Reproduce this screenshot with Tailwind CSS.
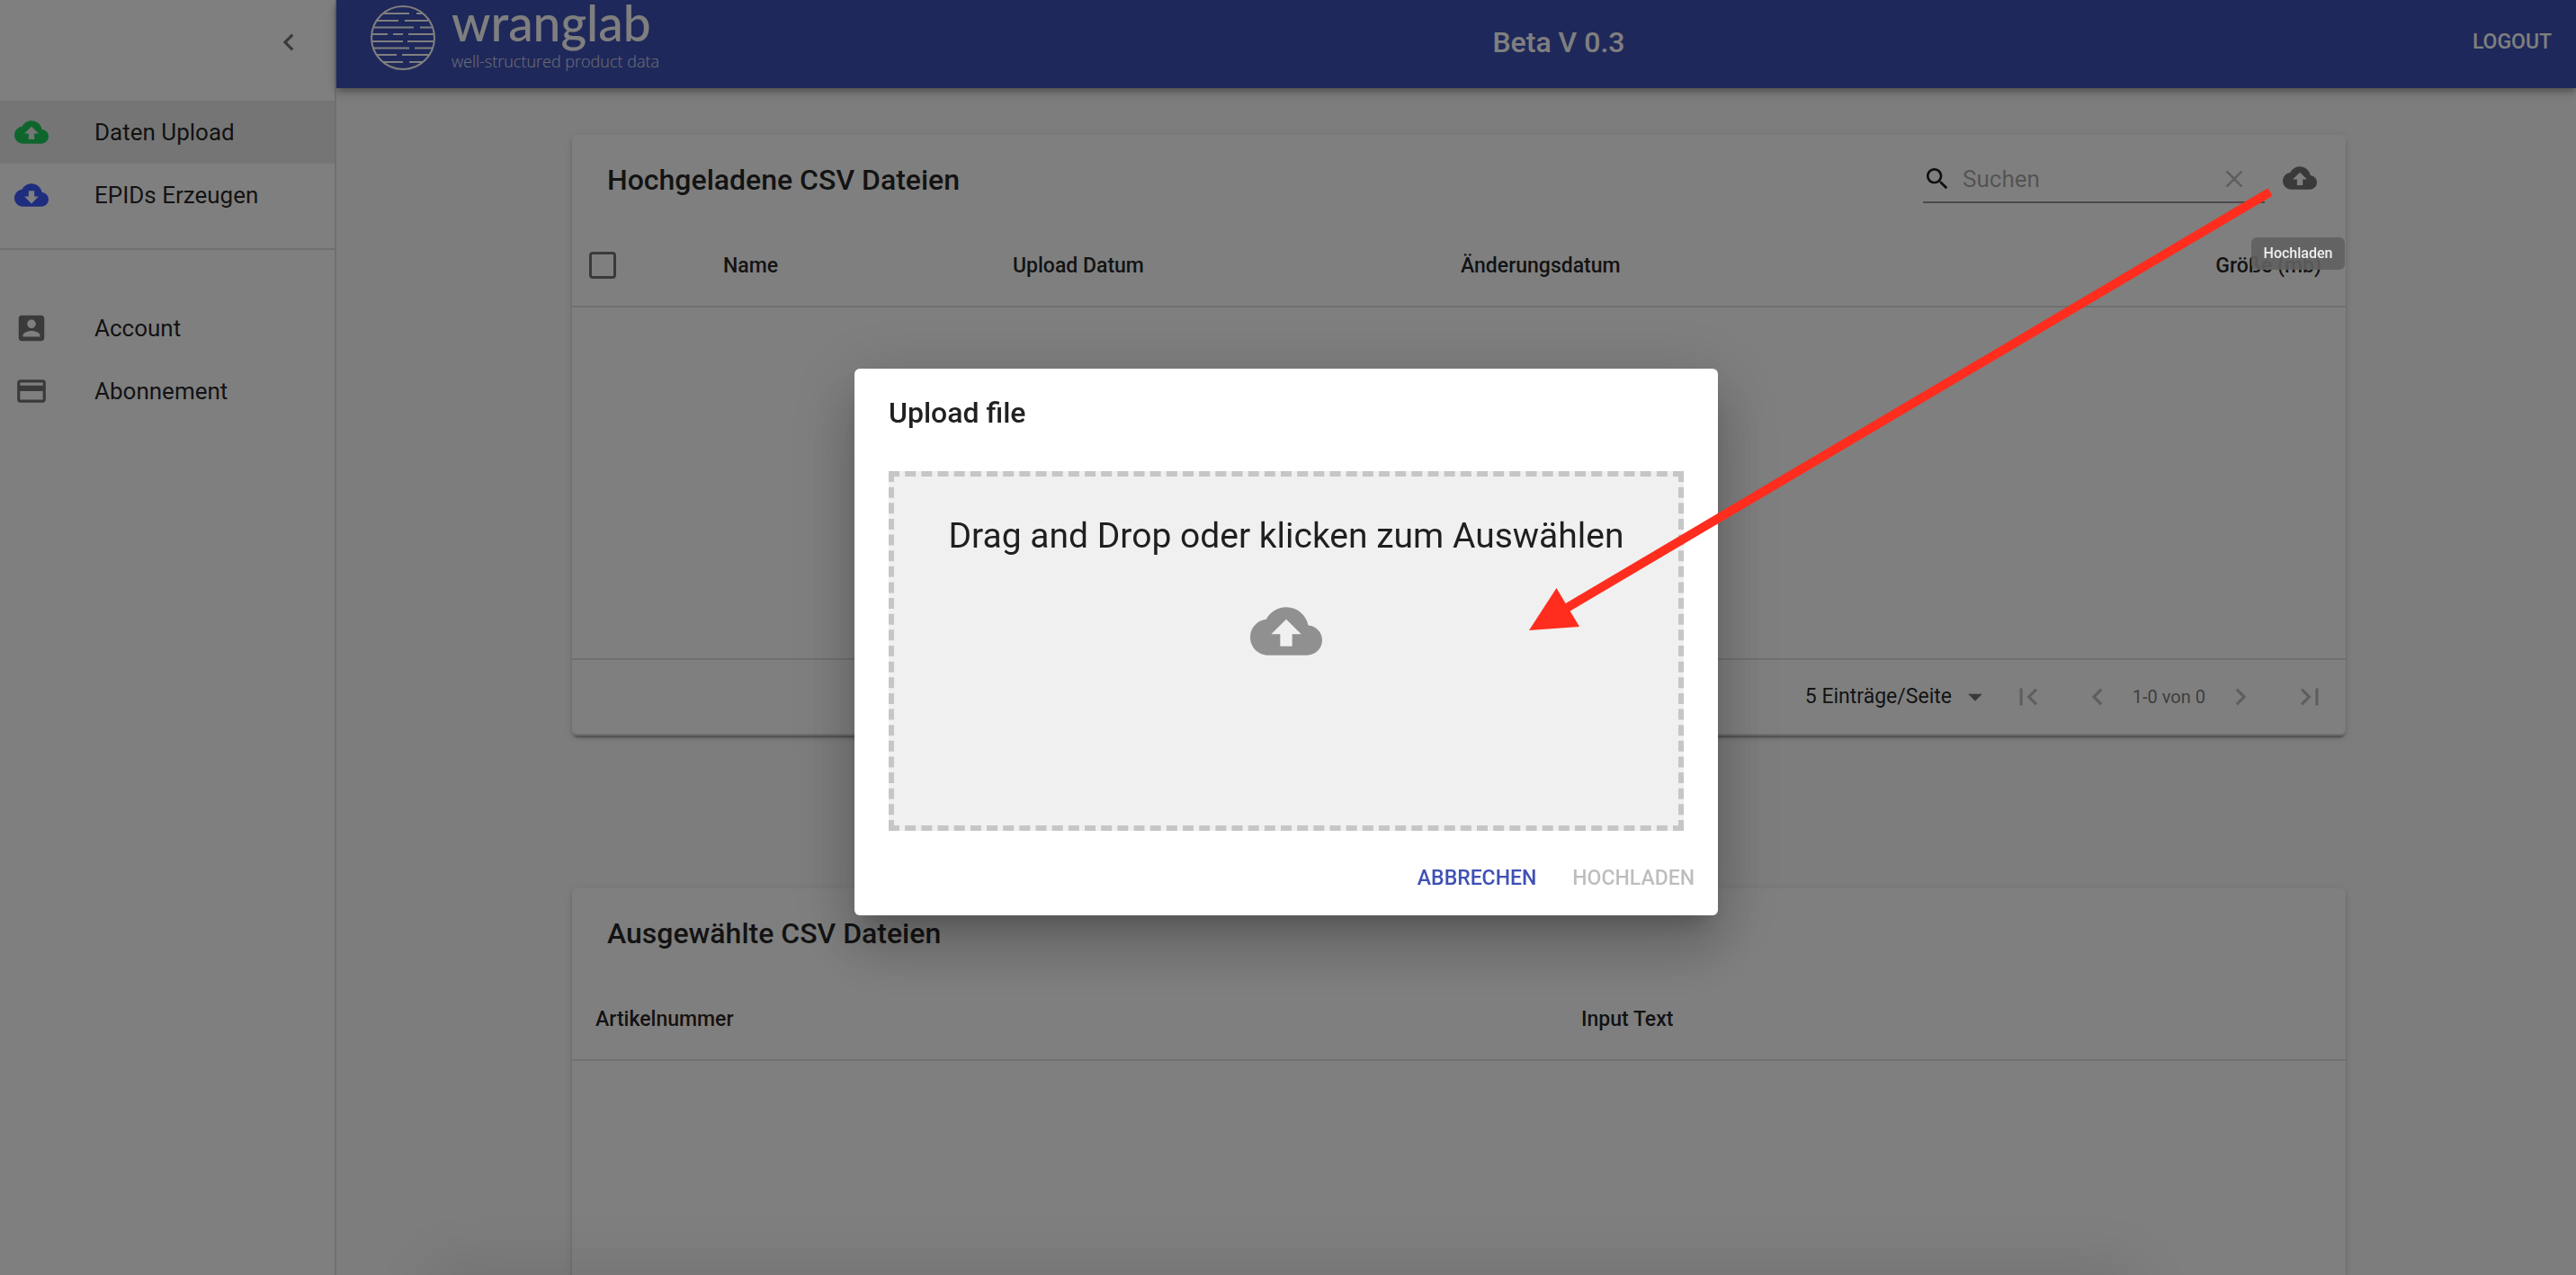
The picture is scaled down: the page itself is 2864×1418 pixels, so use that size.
<!DOCTYPE html>
<html lang="de">
<head>
<meta charset="utf-8">
<title>wranglab</title>
<script src="https://cdn.jsdelivr.net/npm/@tailwindcss/browser@4"></script>
</head>
<body class="font-[Roboto,sans-serif] text-black/87 bg-[#fafafa] overflow-hidden">
<svg class="hidden" aria-hidden="true">
  <symbol id="cloud-up" viewBox="0 0 24 24"><path d="M19.35 10.04C18.67 6.59 15.64 4 12 4 9.11 4 6.6 5.64 5.35 8.04 2.34 8.36 0 10.91 0 14c0 3.31 2.69 6 6 6h13c2.76 0 5-2.24 5-5 0-2.64-2.05-4.78-4.65-4.96zM14 13v4h-4v-4H7l5-5 5 5h-3z"/></symbol>
  <symbol id="cloud-down" viewBox="0 0 24 24"><path d="M19.35 10.04C18.67 6.59 15.64 4 12 4 9.11 4 6.6 5.64 5.35 8.04 2.34 8.36 0 10.91 0 14c0 3.31 2.69 6 6 6h13c2.76 0 5-2.24 5-5 0-2.64-2.05-4.78-4.65-4.96zM17 13l-5 5-5-5h3V9h4v4h3z"/></symbol>
  <symbol id="chev-left" viewBox="0 0 24 24"><path d="M15.41 7.41L14 6l-6 6 6 6 1.41-1.41L10.83 12z"/></symbol>
  <symbol id="chev-right" viewBox="0 0 24 24"><path d="M10 6L8.59 7.41 13.17 12l-4.58 4.59L10 18l6-6z"/></symbol>
</svg>

<div class="flex h-screen">
  <aside class="w-[374px] shrink-0 bg-white border-r-2 border-black/12">
    <div class="flex h-28 items-start justify-end pt-7 pr-8">
      <button type="button" aria-label="Menü einklappen" class="text-black/54"><svg class="size-[38px] fill-current"><use href="#chev-left"/></svg></button>
    </div>
    <nav class="text-[26px]">
      <div class="h-[166px] border-b-2 border-black/12">
        <a href="#" class="flex h-[70px] items-center gap-[51px] pl-4 bg-black/8"><svg class="size-[38px] fill-[#1fcc5b]"><use href="#cloud-up"/></svg>Daten Upload</a>
        <a href="#" class="flex h-[70px] items-center gap-[51px] pl-4"><svg class="size-[38px] fill-[#3f5aff]"><use href="#cloud-down"/></svg>EPIDs Erzeugen</a>
      </div>
      <div class="pt-[52px]">
        <a href="#" class="flex h-[70px] items-center gap-[51px] pl-4"><svg viewBox="0 0 24 24" class="size-[38px] fill-black/54"><path d="M3 5v14c0 1.1.89 2 2 2h14c1.1 0 2-.9 2-2V5c0-1.1-.9-2-2-2H5c-1.11 0-2 .9-2 2zm12 4c0 1.66-1.34 3-3 3s-3-1.34-3-3 1.34-3 3-3 3 1.34 3 3zm-9 8c0-2 4-3.1 6-3.1s6 1.1 6 3.1v1H6v-1z"/></svg>Account</a>
        <a href="#" class="flex h-[70px] items-center gap-[51px] pl-4"><svg viewBox="0 0 24 24" class="size-[38px] fill-black/54"><path d="M20 4H4c-1.11 0-1.99.89-1.99 2L2 18c0 1.11.89 2 2 2h16c1.11 0 2-.89 2-2V6c0-1.11-.89-2-2-2zm0 14H4v-6h16v6zm0-10H4V6h16v2z"/></svg>Abonnement</a>
      </div>
    </nav>
  </aside>

  <div class="flex min-w-0 grow flex-col">
    <header class="z-10 flex h-[98px] shrink-0 items-start justify-between bg-[#3f51b5] pl-9 pr-[27px] text-white shadow-[0_3px_6px_-1px_rgba(0,0,0,0.2),0_6px_8px_rgba(0,0,0,0.14),0_2px_16px_rgba(0,0,0,0.12)]">
      <div class="flex gap-4">
        <svg viewBox="0 0 76 84" class="h-[84px] w-[76px]" fill="none" stroke="white" stroke-width="2">
          <circle cx="38" cy="42" r="35"/>
          <path d="M16 15H45M53 15H60M9 23H33M40 23H66M6 30.500H50M57 30.500H70M4 38H21M27 38H38M44 38H72M3 46H38M43 46H73M5 53.500H45M51 53.500H71M9 61H31M37 61H67M16 69H38M45 69H60"/>
        </svg>
        <div class="flex flex-col">
          <span class="font-[Lato,sans-serif] text-[55px] font-medium leading-[50px]">wranglab</span>
          <span class="font-['Open_Sans',sans-serif] text-[18px] font-light leading-9 text-white/80">well-structured product data</span>
        </div>
      </div>
      <h1 class="mr-4 pt-[27px] text-[32px] font-medium leading-10">Beta V 0.3</h1>
      <button type="button" class="pt-[27px] text-[23px] font-medium leading-10">LOGOUT</button>
    </header>

    <main class="flex min-h-0 grow flex-col gap-[170px] pt-[52px] pl-[262px] pr-64">
      <section class="shrink-0 rounded-md bg-white shadow-[0_5px_2px_-3px_rgba(0,0,0,0.2),0_3px_3px_rgba(0,0,0,0.14),0_2px_8px_rgba(0,0,0,0.12)]">
        <div class="flex h-[100px] items-center pl-[39px] pr-8">
          <h2 class="grow text-[32px] font-medium">Hochgeladene CSV Dateien</h2>
          <label class="mr-5 mb-1 flex h-14 w-[380px] items-center gap-3 border-b-2 border-black/42 pt-1">
            <svg viewBox="0 0 24 24" class="size-8 shrink-0 fill-current"><path d="M15.5 14h-.79l-.28-.27C15.410 12.590 16 11.110 16 9.500 16 5.910 13.090 3 9.500 3S3 5.910 3 9.500 5.910 16 9.500 16c1.610 0 3.090-.59 4.230-1.570l.27.28v.79l5 4.990L20.490 19l-4.990-5zm-6 0C7.010 14 5 11.990 5 9.500S7.010 5 9.500 5 14 7.010 14 9.500 11.990 14 9.500 14z"/></svg>
            <input type="text" placeholder="Suchen" aria-label="Suchen" class="min-w-0 grow text-[26px] outline-none placeholder:text-black/36">
            <button type="button" aria-label="Suche leeren" class="mr-[18px] text-black/26"><svg viewBox="0 0 24 24" class="size-8 fill-current"><path d="M19 6.410L17.590 5 12 10.590 6.410 5 5 6.410 10.590 12 5 17.590 6.410 19 12 13.410 17.590 19 19 17.590 13.410 12z"/></svg></button>
          </label>
          <button type="button" aria-label="Hochladen" aria-describedby="tip" class="mb-1 text-black/54"><svg class="size-[38px] fill-current"><use href="#cloud-up"/></svg></button>
        </div>
        <table class="w-full table-fixed border-collapse text-left text-[23px]">
          <colgroup><col class="w-[142px]"><col class="w-[322px]"><col class="w-[498px]"><col class="w-[498px]"><col></colgroup>
          <thead><tr class="h-[91px] border-b-2 border-[#e0e0e0]">
            <th class="pl-[19px]"><input type="checkbox" aria-label="Alle auswählen" class="block size-[30px] appearance-none rounded-sm border-3 border-black/54"></th>
            <th class="pt-[3px] pl-[26px] font-medium">Name</th>
            <th class="pt-[3px] pl-[26px] font-medium">Upload Datum</th>
            <th class="pt-[3px] pl-[26px] font-medium">Änderungsdatum</th>
            <th class="pt-[3px] pr-[27px] text-right font-medium">Größe (mb)</th>
          </tr></thead>
          <tbody><tr class="h-[392px] border-b-2 border-[#e0e0e0]"><td colspan="5"></td></tr></tbody>
        </table>
        <div class="flex h-[84px] items-center justify-end rounded-b-md border-b-2 border-[#e0e0e0] pr-[2px]">
          <div class="relative mr-[2px] flex items-center">
            <select aria-label="Einträge pro Seite" class="w-[208px] appearance-none text-[23px]"><option>5 Einträge/Seite</option></select>
            <svg viewBox="0 0 24 24" class="pointer-events-none absolute right-0 size-[38px] fill-black/54"><path d="M7 10l5 5 5-5z"/></svg>
          </div>
          <button type="button" disabled aria-label="Erste Seite" class="flex w-[77px] justify-center text-black/26"><svg viewBox="0 0 24 24" class="size-[38px] fill-current"><path d="M18.410 16.590L13.820 12l4.590-4.590L17 6l-6 6 6 6zM6 6h2v12H6z"/></svg></button>
          <button type="button" disabled aria-label="Vorherige Seite" class="flex w-[77px] justify-center text-black/26"><svg class="size-[38px] fill-current"><use href="#chev-left"/></svg></button>
          <span class="text-[20px] text-black/54">1-0 von 0</span>
          <button type="button" disabled aria-label="Nächste Seite" class="flex w-[77px] justify-center text-black/26"><svg class="size-[38px] fill-current"><use href="#chev-right"/></svg></button>
          <button type="button" disabled aria-label="Letzte Seite" class="flex w-[77px] justify-center text-black/26"><svg viewBox="0 0 24 24" class="size-[38px] fill-current"><path d="M5.590 7.410L10.180 12l-4.590 4.590L7 18l6-6-6-6zM16 6h2v12h-2z"/></svg></button>
        </div>
      </section>

      <section class="grow rounded-t-md bg-white shadow-[0_3px_3px_rgba(0,0,0,0.14),0_2px_8px_rgba(0,0,0,0.12)]">
        <div class="flex h-[100px] items-center pl-[39px]"><h2 class="text-[32px] font-medium">Ausgewählte CSV Dateien</h2></div>
        <table class="w-full table-fixed border-collapse text-left text-[23px]">
          <colgroup><col class="w-[1096px]"><col></colgroup>
          <thead><tr class="h-[91px] border-b-2 border-[#e0e0e0]">
            <th class="pt-[3px] pl-[26px] font-medium">Artikelnummer</th>
            <th class="pt-[3px] pl-[26px] font-medium">Input Text</th>
          </tr></thead>
        </table>
      </section>
    </main>
  </div>
</div>

<div class="fixed inset-0 z-20 flex items-center justify-center bg-black/50 pt-[10px] pr-1">
  <div role="dialog" aria-labelledby="dlg-title" class="flex w-[960px] flex-col rounded-md bg-white shadow-[0_18px_24px_-11px_rgba(0,0,0,0.2),0_38px_61px_5px_rgba(0,0,0,0.14),0_14px_74px_13px_rgba(0,0,0,0.12)]">
    <h2 id="dlg-title" class="px-[38px] pt-6 text-[32px] font-medium leading-[50px]">Upload file</h2>
    <div class="px-[38px] pt-10">
      <button type="button" class="flex h-[400px] w-full flex-col items-center gap-10 border-6 border-dashed border-[#c6c6c6] bg-[#f0f0f0] pt-10">
        <span class="text-[39px] leading-[52px]">Drag and Drop oder klicken zum Auswählen</span>
        <svg class="size-20 fill-[#909090]"><use href="#cloud-up"/></svg>
      </button>
    </div>
    <div class="flex h-[94px] items-center justify-end gap-10 pt-3 pr-[26px] text-[23px] font-medium">
      <button type="button" class="text-[#3f51b5]">ABBRECHEN</button>
      <button type="button" disabled class="text-black/26">HOCHLADEN</button>
    </div>
  </div>
</div>

<!-- soft shade along the lower window edge -->
<div class="pointer-events-none fixed -bottom-8 left-[500px] right-[510px] z-20 h-4 shadow-[0_0_70px_20px_rgba(0,0,0,0.12)]"></div>

<div id="tip" role="tooltip" class="absolute top-66 right-[257px] z-30 flex h-9 w-[104px] items-center justify-center rounded-md bg-[#616161]/90 text-base font-medium text-[#eeeeee]">Hochladen</div>

<svg class="pointer-events-none absolute top-[200px] right-[330px] z-40 h-[510px] w-[840px]" viewBox="0 0 840 510" fill="#ff2d1e" aria-hidden="true">
  <path d="M830 13.500L48 476" stroke="#ff2d1e" stroke-width="10"/>
  <path d="M6 501L36.500 454L62 497z"/>
</svg>
</body>
</html>
